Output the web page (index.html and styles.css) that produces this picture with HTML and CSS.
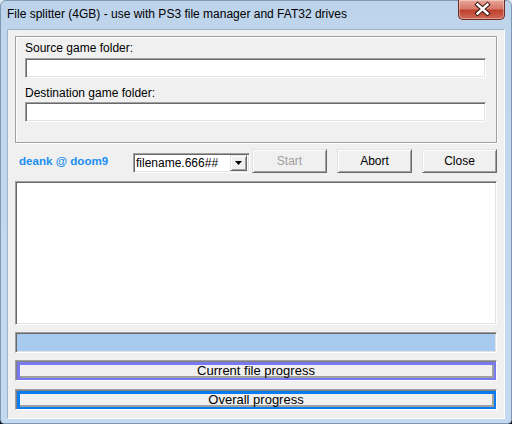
FILE: index.html
```html
<!DOCTYPE html>
<html>
<head>
<meta charset="utf-8">
<link rel="stylesheet" href="styles.css">
</head>
<body>
<div class="window">
  <div class="titlebar">
    <span class="title">File splitter (4GB) - use with PS3 file manager and FAT32 drives</span>
    <div class="close-btn">
      <svg width="47" height="19" viewBox="0 0 47 19">
        <path d="M18.5 4.5 L28.5 13.5 M28.5 4.5 L18.5 13.5" stroke="#3b1410" stroke-width="4.4" stroke-linecap="square" fill="none"/>
        <path d="M18.5 4.5 L28.5 13.5 M28.5 4.5 L18.5 13.5" stroke="#ffffff" stroke-width="2.4" stroke-linecap="square" fill="none"/>
      </svg>
    </div>
  </div>
  <div class="client">
    <div class="group">
      <div class="label">Source game folder:</div>
      <div class="field"></div>
      <div class="label second">Destination game folder:</div>
      <div class="field"></div>
    </div>
    <div class="controls">
      <div class="credit">deank @ doom9</div>
      <div class="combo">
        <span class="combo-text">filename.666##</span>
        <div class="drop">
          <svg width="7" height="4" viewBox="0 0 7 4"><path d="M0 0 H7 L3.5 4 Z" fill="#000"/></svg>
        </div>
      </div>
      <div class="btn disabled">Start</div>
      <div class="btn">Abort</div>
      <div class="btn">Close</div>
    </div>
    <div class="log"></div>
    <div class="bar filled"></div>
    <div class="bar purple"><div class="bar-inner">Current file progress</div></div>
    <div class="bar blue"><div class="bar-inner">Overall progress</div></div>
  </div>
</div>
</body>
</html>
```
FILE: styles.css
```css
* { box-sizing: border-box; }
html, body { margin: 0; padding: 0; }
body {
  width: 512px;
  height: 424px;
  overflow: hidden;
  background: linear-gradient(#dce7f3 50%, #000 50%);
  font-family: "Liberation Sans", Arial, sans-serif;
  font-size: 12px;
  color: #000;
}
.window {
  width: 512px;
  height: 424px;
  border: 1px solid #7f97b3;
  border-radius: 6px 6px 4px 4px;
  background: linear-gradient(180deg, #bcd3eb 0px, #c0d6ed 40px, #c4daf0 100%);
  display: flex;
  flex-direction: column;
}
.titlebar {
  height: 28px;
  display: flex;
  align-items: flex-start;
  padding-left: 6px;
}
.title {
  margin-top: 6px;
  line-height: 14px;
  font-size: 12px;
  color: #000;
  white-space: nowrap;
}
.close-btn {
  margin-left: auto;
  margin-right: 6px;
  margin-top: -1px;
  width: 47px;
  height: 20px;
  border: 1px solid #6b2c24;
  border-top: none;
  border-radius: 0 0 5px 5px;
  background: linear-gradient(180deg, #e8a597 0%, #d7786a 45%, #c0412f 55%, #cf6a58 100%);
  box-shadow: inset 0 0 0 1px rgba(255,255,255,0.35);
  overflow: hidden;
}
.close-btn svg { display: block; }
.client {
  margin: 0 6px;
  height: 390px;
  border: 1px solid;
  border-color: #9fb3ca #ffffff #ffffff #9fb3ca;
  background: #f0f0f0;
  padding: 6px 7px 0 7px;
  display: flex;
  flex-direction: column;
}
.group {
  height: 107px;
  border: 1px solid #a0a0a0;
  box-shadow: inset 1px 1px 0 #fff, 1px 1px 0 #fff;
  padding: 4px 10px 0 9px;
}
.label {
  line-height: 14px;
  height: 14px;
  margin-bottom: 3px;
}
.label.second { margin-top: 8px; margin-bottom: 2px; }
.field {
  height: 20px;
  background: #fff;
  border: 1px solid;
  border-color: #a0a0a0 #fff #fff #a0a0a0;
  box-shadow: inset 1px 1px 0 #696969, inset -1px -1px 0 #e3e3e3;
}
.controls {
  margin-top: 6px;
  height: 24px;
  display: flex;
  align-items: flex-start;
}
.credit {
  width: 118px;
  padding-left: 4px;
  margin-top: 5px;
  line-height: 14px;
  font-weight: bold;
  font-size: 11.6px;
  color: #1b8ef2;
}
.combo {
  width: 117px;
  height: 20px;
  margin-top: 4px;
  margin-right: 2px;
  background: #fff;
  border: 1px solid;
  border-color: #a0a0a0 #fff #fff #a0a0a0;
  box-shadow: inset 1px 1px 0 #696969, inset -1px -1px 0 #e3e3e3;
  display: flex;
  align-items: center;
  padding: 0 2px 0 2px;
}
.combo-text {
  flex: 1;
  line-height: 14px;
  white-space: nowrap;
}
.drop {
  width: 17px;
  height: 16px;
  background: #f0f0f0;
  border: 1px solid;
  border-color: #e3e3e3 #696969 #696969 #e3e3e3;
  box-shadow: inset 1px 1px 0 #fff, inset -1px -1px 0 #a0a0a0;
  display: flex;
  align-items: center;
  justify-content: center;
}
.drop svg { display: block; }
.btn {
  width: 75px;
  height: 24px;
  margin-left: 10px;
  background: #f0f0f0;
  border: 1px solid;
  border-color: #e3e3e3 #696969 #696969 #e3e3e3;
  box-shadow: inset 1px 1px 0 #fff, inset -1px -1px 0 #a0a0a0;
  display: flex;
  align-items: center;
  justify-content: center;
  line-height: 14px;
}
.combo + .btn { margin-left: 0; }
.btn.disabled { color: #a0a0a0; }
.log {
  margin-top: 8px;
  height: 144px;
  background: #fff;
  border: 1px solid;
  border-color: #a0a0a0 #fff #fff #a0a0a0;
  box-shadow: inset 1px 1px 0 #696969, inset -1px -1px 0 #e3e3e3;
}
.bar {
  margin-top: 7px;
  height: 21px;
  border: 1px solid;
  border-color: #a0a0a0 #fff #fff #a0a0a0;
  box-shadow: inset 1px 1px 0 #808080;
  padding: 4px 2px 2px 4px;
}
.bar:last-child { margin-top: 8px; }
.bar.filled {
  background: #a6caf0;
  box-shadow: inset 1px 1px 0 #696969, inset -1px -1px 0 #e3e3e3;
}
.bar.purple { background: #7878f0; }
.bar.blue { background: #0b7cf0; }
.bar-inner {
  height: 100%;
  border-right: 2px solid #a0a0a0;
  border-bottom: 2px solid #a0a0a0;
  background: #f0f0f0;
  display: flex;
  align-items: center;
  justify-content: center;
  line-height: 14px;
  font-size: 13px;
  color: #000;
}
```
